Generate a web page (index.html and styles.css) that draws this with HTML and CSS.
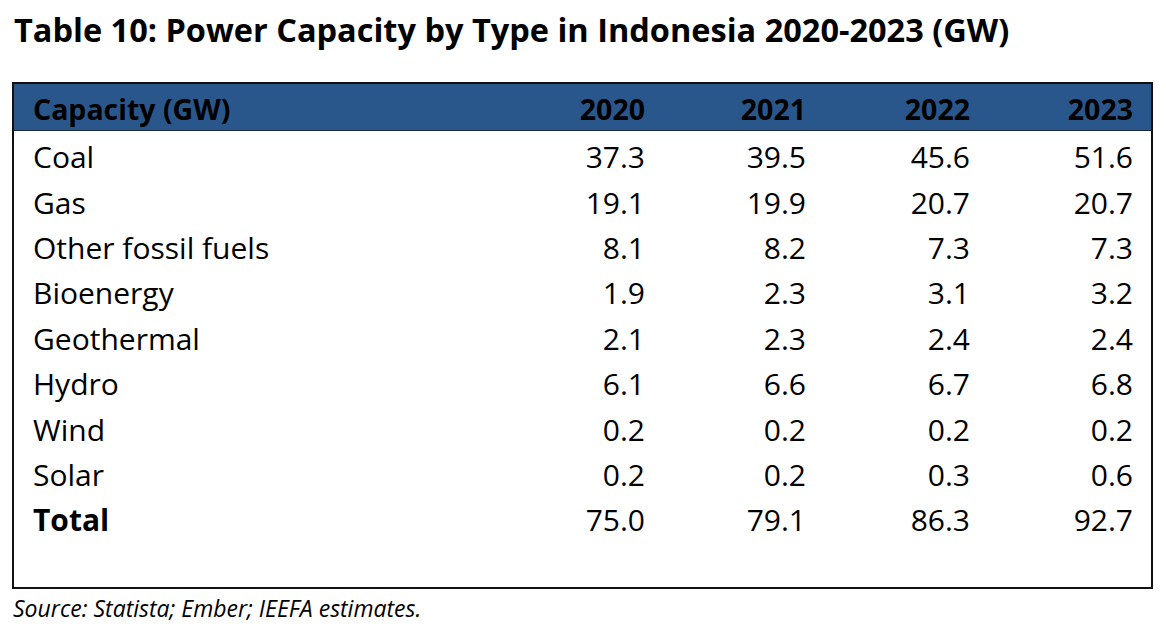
FILE: index.html
```html
<!DOCTYPE html>
<html lang="en">
<head>
<meta charset="utf-8">
<title>Table 10</title>
<link rel="stylesheet" href="styles.css">
</head>
<body>
<div class="page">
  <h1 class="title">Table 10: Power Capacity by Type in Indonesia 2020-2023 (GW)</h1>
  <div class="table">
    <div class="row head">
      <div class="label">Capacity (GW)</div>
      <div class="num">2020</div>
      <div class="num">2021</div>
      <div class="num">2022</div>
      <div class="num">2023</div>
    </div>
    <div class="body">
      <div class="row"><div class="label">Coal</div><div class="num">37.3</div><div class="num">39.5</div><div class="num">45.6</div><div class="num">51.6</div></div>
      <div class="row"><div class="label">Gas</div><div class="num">19.1</div><div class="num">19.9</div><div class="num">20.7</div><div class="num">20.7</div></div>
      <div class="row"><div class="label">Other fossil fuels</div><div class="num">8.1</div><div class="num">8.2</div><div class="num">7.3</div><div class="num">7.3</div></div>
      <div class="row"><div class="label">Bioenergy</div><div class="num">1.9</div><div class="num">2.3</div><div class="num">3.1</div><div class="num">3.2</div></div>
      <div class="row"><div class="label">Geothermal</div><div class="num">2.1</div><div class="num">2.3</div><div class="num">2.4</div><div class="num">2.4</div></div>
      <div class="row"><div class="label">Hydro</div><div class="num">6.1</div><div class="num">6.6</div><div class="num">6.7</div><div class="num">6.8</div></div>
      <div class="row"><div class="label">Wind</div><div class="num">0.2</div><div class="num">0.2</div><div class="num">0.2</div><div class="num">0.2</div></div>
      <div class="row"><div class="label">Solar</div><div class="num">0.2</div><div class="num">0.2</div><div class="num">0.3</div><div class="num">0.6</div></div>
      <div class="row total"><div class="label">Total</div><div class="num">75.0</div><div class="num">79.1</div><div class="num">86.3</div><div class="num">92.7</div></div>
    </div>
  </div>
  <p class="source">Source: Statista; Ember; IEEFA estimates.</p>
</div>
</body>
</html>
```

FILE: styles.css
```css
html, body {
  margin: 0;
  padding: 0;
  background: #ffffff;
}

body {
  font-family: "Open Sans", Lato, "Liberation Sans", sans-serif;
  color: #000000;
  width: 1166px;
  height: 632px;
  overflow: hidden;
}

.page {
  padding: 0 0 0 12px;
}

.title {
  margin: 0;
  padding: 12px 0 0 2px;
  height: 68px;
  box-sizing: border-box;
  font-size: 32.5px;
  font-weight: 700;
  line-height: 36px;
  letter-spacing: 0;
}

.table {
  width: 1141px;
  height: 507px;
  box-sizing: border-box;
  border: 2px solid #111111;
  margin-top: 14px;
}

.row {
  display: grid;
  grid-template-columns: 1fr 150px 161px 164px 163px;
  padding: 0 18px 0 19px;
  align-items: center;
  height: 45.4px;
  font-size: 30px;
}

.head {
  height: 47px;
  background: #2a578b;
  border-bottom: 1px solid #1a2a3d;
  font-weight: 700;
  font-size: 28.5px;
  padding-top: 4px;
  box-sizing: border-box;
}

.body {
  padding-top: 3px;
}

.num {
  text-align: right;
}

.total .label {
  font-weight: 700;
}

.source {
  margin: 5px 0 0 1px;
  font-size: 23px;
  font-style: italic;
  line-height: 28px;
}
```
